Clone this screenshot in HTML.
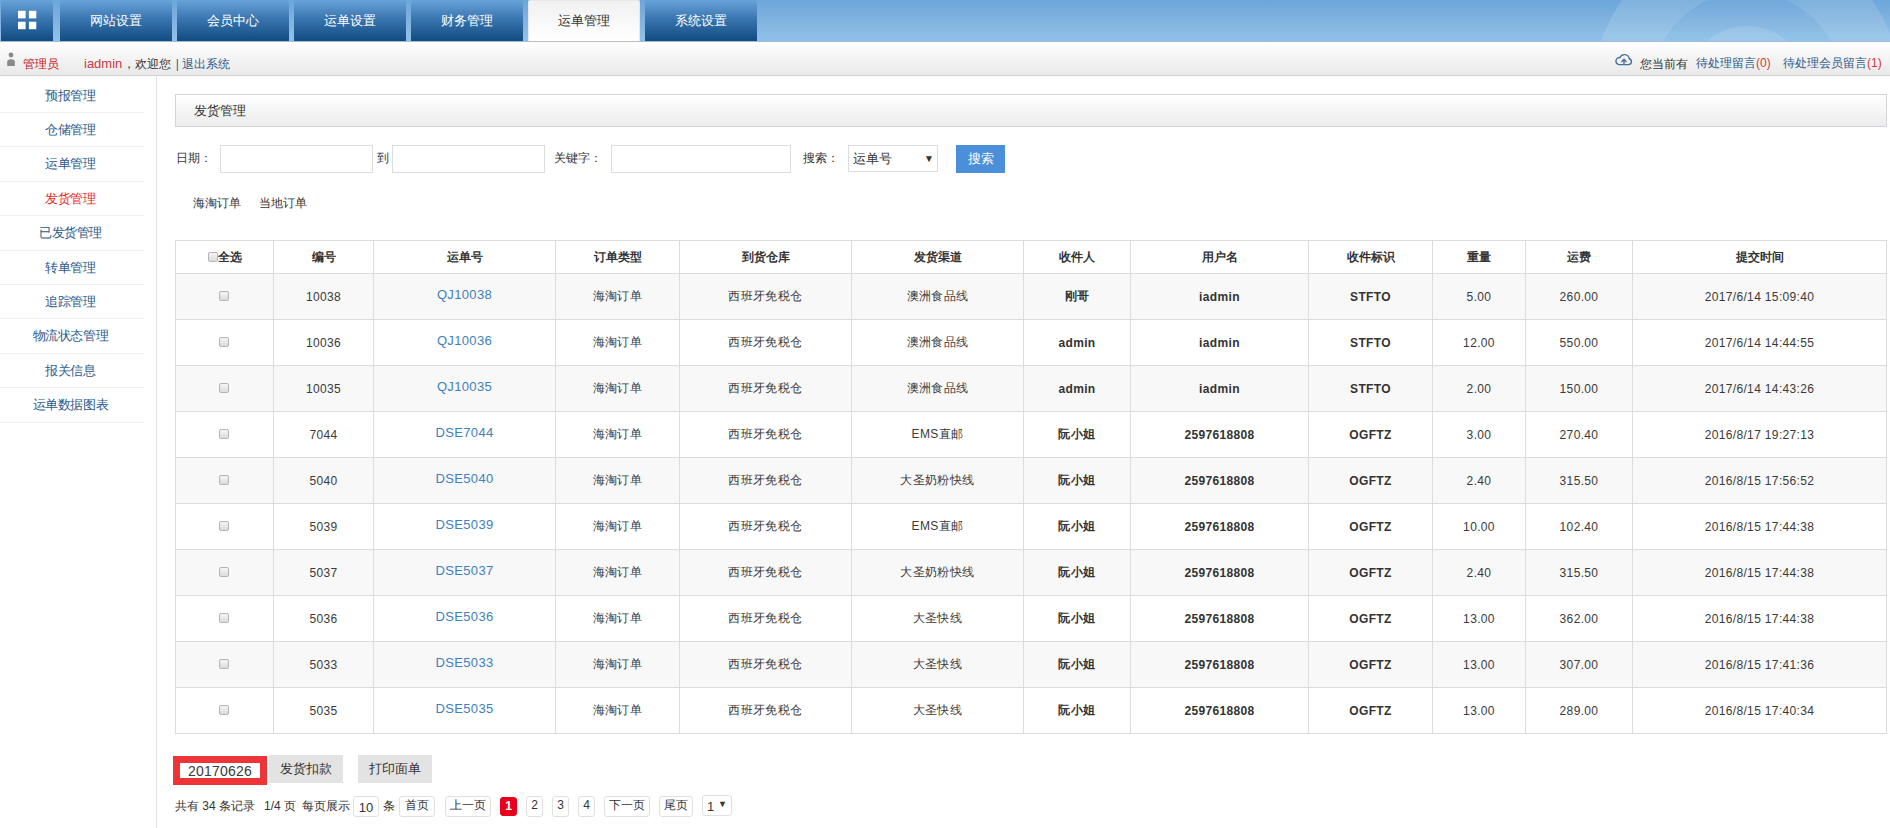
<!DOCTYPE html>
<html><head><meta charset="utf-8">
<style>
*{margin:0;padding:0;box-sizing:border-box}
html,body{width:1890px;height:828px;overflow:hidden;background:#fff;font-family:"Liberation Sans",sans-serif;font-size:12px;color:#333}
.abs{position:absolute}
#top{position:absolute;left:0;top:0;width:1890px;height:42px;background:linear-gradient(#6ca6da,#89b9e2 72%,#8cbfe6 85%,#8ebfec);border-bottom:1px solid #a6bcd6;overflow:hidden}
.tab{position:absolute;top:0;height:41px;width:112px;background:linear-gradient(#6aa3db,#3a76b0 45%,#114b82);color:#fff;font-size:13px;line-height:42px;text-align:center;border-radius:2px 2px 0 0}
.tab.on{height:42px;border-bottom:1px solid #bcc1c6 !important;background:linear-gradient(#f1f1f1,#fff);color:#333;border:1px solid #e6e9ec;border-bottom:0;line-height:40px}
#bar{position:absolute;left:0;top:42px;width:1890px;height:34px;background:linear-gradient(#fff,#e9e9e9);border-bottom:1px solid #cfd3d8}
#side{position:absolute;left:0;top:76px;width:157px;height:752px;border-right:1px solid #e2e2e2}
.si{position:absolute;left:0;width:144px;height:34.4px;border-bottom:1px solid #f0f0f0;text-align:center;color:#2c5a8c;font-size:13px;line-height:34px;letter-spacing:-0.4px;padding-right:3px}
.si.on{color:#e32b2b}
#title{position:absolute;left:175px;top:94px;width:1712px;height:33px;border:1px solid #d3d5da;background:linear-gradient(#fff,#ececec);font-size:13px;line-height:31px;padding-left:18px;color:#333}
.lbl{position:absolute;top:151px;font-size:12px;color:#333;line-height:14px}
.inp{position:absolute;top:145px;height:28px;border:1px solid #dcdcdc;background:#fff}
#tbl{position:absolute;left:175px;top:240px;border-collapse:collapse;table-layout:fixed}
#tbl td,#tbl th{border:1px solid #dcdcdc;text-align:center;font-size:12px;color:#333;padding:0}
#tbl th{height:33px;font-weight:bold}
#tbl td{height:46px;letter-spacing:0.35px;color:#3a3a3a}
#tbl tr.g td{background:#f8f8f8}
#tbl a{color:#3f7fbd;font-size:13px;text-decoration:none;position:relative;top:-2px}
#tbl b{color:#333}
.cb{display:inline-block;width:10px;height:10px;border:1px solid #b5b5b5;border-radius:2px;background:linear-gradient(#f5f5f5,#dcdcdc);vertical-align:middle;position:relative;left:-1px;top:-1px}
.hcb{top:0;left:0}
.pg{position:absolute;top:796px;height:21px;border:1px solid #e0e0e0;border-radius:3px;background:#fff;text-align:center;line-height:17px;font-size:12px;color:#333}
</style></head><body>
<div id="top">
  <div class="tab" style="left:1px;width:52px"></div>
  <div class="tab" style="left:60px">网站设置</div>
  <div class="tab" style="left:177px">会员中心</div>
  <div class="tab" style="left:294px">运单设置</div>
  <div class="tab" style="left:411px">财务管理</div>
  <div class="tab on" style="left:528px">运单管理</div>
  <div class="tab" style="left:645px">系统设置</div>
  <svg class="abs" style="left:0;top:0" width="1890" height="41">
    <path fill="#fff" fill-opacity="0.13" fill-rule="evenodd" d="M1594,88a153,153 0 1,0 306,0a153,153 0 1,0 -306,0zM1651,88a96,96 0 1,0 192,0a96,96 0 1,0 -192,0z"/>
    <circle cx="1747" cy="88" r="96" fill="#fff" fill-opacity="0.03"/>
    <circle cx="1747" cy="88" r="62" fill="#fff" fill-opacity="0.12"/>
  </svg>
  <svg class="abs" style="left:0;top:0" width="53" height="41"><g fill="#fff"><rect x="18" y="10.8" width="7.6" height="7.6"/><rect x="28.9" y="10.8" width="7.4" height="7.6"/><rect x="18" y="21.7" width="7.6" height="7.5"/><rect x="28.9" y="21.7" width="7.4" height="7.5"/></g></svg>
</div>
<div class="abs" style="left:528px;top:41px;width:112px;height:1px;background:#b9bec4;z-index:2"></div>
<div id="bar">
  
  <svg class="abs" style="left:5px;top:9px" width="12" height="16"><circle cx="6" cy="4" r="2.4" fill="#8a8a8a"/><path d="M2.2,15 L2.2,11 Q2.2,8.3 6,8.3 Q9.8,8.3 9.8,11 L9.8,15 Z" fill="#8a8a8a"/></svg>
  <div class="abs" style="left:23px;top:15px;line-height:14px;color:#c9141c">管理员</div>
  <div class="abs" style="left:84px;top:15px;line-height:14px;color:#333"><span style="color:#c83a48;font-size:13px">iadmin</span><span style="margin-left:1px">，欢迎您</span> <span style="color:#2c5a8c;margin-left:1px">| 退出系统</span></div>
  <svg class="abs" style="left:1614px;top:10px" width="20" height="14" viewBox="0 0 20 14"><path d="M5,12.6 H14.5 A3,3 0 0 0 15.2,6.7 A4.8,4.8 0 0 0 6,5.6 A3.5,3.5 0 0 0 5,12.6 Z" fill="none" stroke="#4a7199" stroke-width="1.4"/><path d="M10,12.6 V7.4 M7.4,9.9 L10,7.3 L12.6,9.9" fill="none" stroke="#4a7199" stroke-width="1.4"/></svg>
  <div class="abs" style="left:1640px;top:15px;line-height:14px;color:#333">您当前有</div>
  <div class="abs" style="left:1696px;top:14px;line-height:14px;color:#2c5a8c">待处理留言<span style="color:#d03a3a">(0)</span></div>
  <div class="abs" style="left:1783px;top:14px;line-height:14px;color:#2c5a8c">待处理会员留言<span style="color:#d03a3a">(1)</span></div>
</div>
<div id="side">
  <div class="si" style="top:2.6px">预报管理</div>
  <div class="si" style="top:37.0px">仓储管理</div>
  <div class="si" style="top:71.4px">运单管理</div>
  <div class="si on" style="top:105.8px">发货管理</div>
  <div class="si" style="top:140.2px">已发货管理</div>
  <div class="si" style="top:174.6px">转单管理</div>
  <div class="si" style="top:209.0px">追踪管理</div>
  <div class="si" style="top:243.4px">物流状态管理</div>
  <div class="si" style="top:277.8px">报关信息</div>
  <div class="si" style="top:312.2px">运单数据图表</div>
</div>
<div id="title">发货管理</div>
<div class="lbl" style="left:176px">日期：</div>
<div class="inp" style="left:220px;width:153px"></div>
<div class="lbl" style="left:377px">到</div>
<div class="inp" style="left:392px;width:153px"></div>
<div class="lbl" style="left:554px">关键字：</div>
<div class="inp" style="left:611px;width:180px"></div>
<div class="lbl" style="left:803px">搜索：</div>
<div class="inp" style="left:848px;width:90px;height:27px;font-size:13px;line-height:25px;padding-left:4px">运单号<span style="position:absolute;left:75px;top:0;font-size:10px">&#9660;</span></div>
<div class="abs" style="left:956px;top:145px;width:49px;height:28px;background:#4b8fda;color:#fff;font-size:13px;line-height:28px;text-align:center">搜索</div>

<div class="abs" style="left:193px;top:196px;font-size:12px;color:#333;line-height:14px">海淘订单</div>
<div class="abs" style="left:259px;top:196px;font-size:12px;color:#333;line-height:14px">当地订单</div>
<table id="tbl" style="width:1712px">
<colgroup><col style="width:98px"><col style="width:100px"><col style="width:182px"><col style="width:124px"><col style="width:172px"><col style="width:172px"><col style="width:107px"><col style="width:178px"><col style="width:124px"><col style="width:93px"><col style="width:107px"><col style="width:254px"></colgroup>
<tr><th><span class="cb hcb"></span>全选</th><th>编号</th><th>运单号</th><th>订单类型</th><th>到货仓库</th><th>发货渠道</th><th>收件人</th><th>用户名</th><th>收件标识</th><th>重量</th><th>运费</th><th>提交时间</th></tr>
<tr class="g"><td><span class="cb"></span></td><td>10038</td><td><a>QJ10038</a></td><td>海淘订单</td><td>西班牙免税仓</td><td>澳洲食品线</td><td><b>刚哥</b></td><td><b>iadmin</b></td><td><b>STFTO</b></td><td>5.00</td><td>260.00</td><td>2017/6/14 15:09:40</td></tr>
<tr><td><span class="cb"></span></td><td>10036</td><td><a>QJ10036</a></td><td>海淘订单</td><td>西班牙免税仓</td><td>澳洲食品线</td><td><b>admin</b></td><td><b>iadmin</b></td><td><b>STFTO</b></td><td>12.00</td><td>550.00</td><td>2017/6/14 14:44:55</td></tr>
<tr class="g"><td><span class="cb"></span></td><td>10035</td><td><a>QJ10035</a></td><td>海淘订单</td><td>西班牙免税仓</td><td>澳洲食品线</td><td><b>admin</b></td><td><b>iadmin</b></td><td><b>STFTO</b></td><td>2.00</td><td>150.00</td><td>2017/6/14 14:43:26</td></tr>
<tr><td><span class="cb"></span></td><td>7044</td><td><a>DSE7044</a></td><td>海淘订单</td><td>西班牙免税仓</td><td>EMS直邮</td><td><b>阮小姐</b></td><td><b>2597618808</b></td><td><b>OGFTZ</b></td><td>3.00</td><td>270.40</td><td>2016/8/17 19:27:13</td></tr>
<tr class="g"><td><span class="cb"></span></td><td>5040</td><td><a>DSE5040</a></td><td>海淘订单</td><td>西班牙免税仓</td><td>大圣奶粉快线</td><td><b>阮小姐</b></td><td><b>2597618808</b></td><td><b>OGFTZ</b></td><td>2.40</td><td>315.50</td><td>2016/8/15 17:56:52</td></tr>
<tr><td><span class="cb"></span></td><td>5039</td><td><a>DSE5039</a></td><td>海淘订单</td><td>西班牙免税仓</td><td>EMS直邮</td><td><b>阮小姐</b></td><td><b>2597618808</b></td><td><b>OGFTZ</b></td><td>10.00</td><td>102.40</td><td>2016/8/15 17:44:38</td></tr>
<tr class="g"><td><span class="cb"></span></td><td>5037</td><td><a>DSE5037</a></td><td>海淘订单</td><td>西班牙免税仓</td><td>大圣奶粉快线</td><td><b>阮小姐</b></td><td><b>2597618808</b></td><td><b>OGFTZ</b></td><td>2.40</td><td>315.50</td><td>2016/8/15 17:44:38</td></tr>
<tr><td><span class="cb"></span></td><td>5036</td><td><a>DSE5036</a></td><td>海淘订单</td><td>西班牙免税仓</td><td>大圣快线</td><td><b>阮小姐</b></td><td><b>2597618808</b></td><td><b>OGFTZ</b></td><td>13.00</td><td>362.00</td><td>2016/8/15 17:44:38</td></tr>
<tr class="g"><td><span class="cb"></span></td><td>5033</td><td><a>DSE5033</a></td><td>海淘订单</td><td>西班牙免税仓</td><td>大圣快线</td><td><b>阮小姐</b></td><td><b>2597618808</b></td><td><b>OGFTZ</b></td><td>13.00</td><td>307.00</td><td>2016/8/15 17:41:36</td></tr>
<tr><td><span class="cb"></span></td><td>5035</td><td><a>DSE5035</a></td><td>海淘订单</td><td>西班牙免税仓</td><td>大圣快线</td><td><b>阮小姐</b></td><td><b>2597618808</b></td><td><b>OGFTZ</b></td><td>13.00</td><td>289.00</td><td>2016/8/15 17:40:34</td></tr>
</table>
<div class="abs" style="left:173px;top:756px;width:94px;height:29px;background:#ee3436"></div>
<div class="abs" style="left:180px;top:763px;width:80px;height:15px;background:#fff;font-size:14px;line-height:16px;text-align:center;color:#3a3a3a;letter-spacing:0.2px">20170626</div>
<div class="abs" style="left:269px;top:755px;width:74px;height:28px;background:#e3e3e3;font-size:13px;line-height:28px;text-align:center;color:#333">发货扣款</div>
<div class="abs" style="left:358px;top:755px;width:74px;height:28px;background:#e3e3e3;font-size:13px;line-height:28px;text-align:center;color:#333">打印面单</div>
<div class="abs" style="left:175px;top:799px;font-size:12px;line-height:14px;color:#333">共有 34 条记录</div>
<div class="abs" style="left:264px;top:799px;font-size:12px;line-height:14px;color:#333">1/4 页</div>
<div class="abs" style="left:302px;top:799px;font-size:12px;line-height:14px;color:#333">每页展示</div>
<div class="pg" style="left:353px;width:26px;font-size:13px;line-height:22px">10</div>
<div class="abs" style="left:383px;top:799px;font-size:12px;line-height:14px;color:#333">条</div>
<div class="pg" style="left:399px;width:36px">首页</div>
<div class="pg" style="left:445px;width:46px">上一页</div>
<div class="pg" style="left:500px;top:797px;height:19px;width:17px;background:#e8001c;border-color:#e8001c;color:#fff;font-weight:bold;line-height:16px">1</div>
<div class="pg" style="left:526px;width:17px">2</div>
<div class="pg" style="left:552px;width:17px">3</div>
<div class="pg" style="left:578px;width:17px">4</div>
<div class="pg" style="left:604px;width:46px">下一页</div>
<div class="pg" style="left:659px;width:34px">尾页</div>
<div class="pg" style="left:702px;top:795px;width:30px;text-align:left;padding-left:4px;font-size:13px;line-height:22px">1 <span style="font-size:9px;position:absolute;left:15px;top:-3px">&#9660;</span></div>
</body></html>
